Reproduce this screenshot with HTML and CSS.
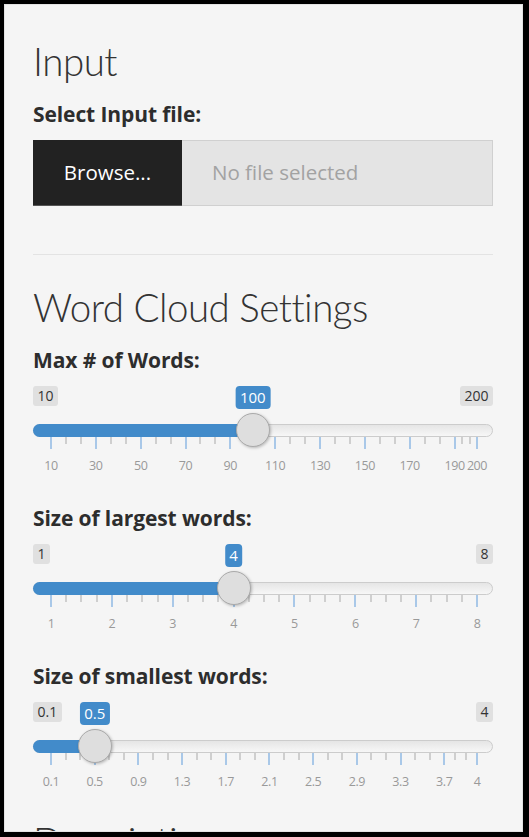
FILE: index.html
```html
<!DOCTYPE html>
<html lang="en">
<head>
<meta charset="utf-8">
<title>Word Cloud</title>
<link rel="stylesheet" href="styles.css">
</head>
<body>
<div class="well">
  <h3 class="heading">Input</h3>
  <div class="form-group">
    <label class="control-label">Select Input file:</label>
    <div class="file-input">
      <span class="btn-browse">Browse...</span>
      <span class="file-name">No file selected</span>
    </div>
  </div>
  <hr class="divider">
  <h3 class="heading">Word Cloud Settings</h3>

  <div class="form-group slider-group">
    <label class="control-label">Max # of Words:</label>
    <div class="irs">
      <div class="irs-minmax"><span class="irs-box">10</span><span class="irs-box">200</span></div>
      <div class="irs-line"><div class="irs-bar" style="width: calc(18px + 0.47368 * (100% - 32px))"></div></div>
      <div class="irs-grid">
        <span class="tick major" style="left:0%"><span class="tick-label">10</span></span>
        <span class="tick" style="left:3.509%"></span>
        <span class="tick" style="left:7.018%"></span>
        <span class="tick major" style="left:10.526%"><span class="tick-label">30</span></span>
        <span class="tick" style="left:14.035%"></span>
        <span class="tick" style="left:17.544%"></span>
        <span class="tick major" style="left:21.053%"><span class="tick-label">50</span></span>
        <span class="tick" style="left:24.561%"></span>
        <span class="tick" style="left:28.070%"></span>
        <span class="tick major" style="left:31.579%"><span class="tick-label">70</span></span>
        <span class="tick" style="left:35.088%"></span>
        <span class="tick" style="left:38.596%"></span>
        <span class="tick major" style="left:42.105%"><span class="tick-label">90</span></span>
        <span class="tick" style="left:45.614%"></span>
        <span class="tick" style="left:49.123%"></span>
        <span class="tick major" style="left:52.632%"><span class="tick-label">110</span></span>
        <span class="tick" style="left:56.140%"></span>
        <span class="tick" style="left:59.649%"></span>
        <span class="tick major" style="left:63.158%"><span class="tick-label">130</span></span>
        <span class="tick" style="left:66.667%"></span>
        <span class="tick" style="left:70.175%"></span>
        <span class="tick major" style="left:73.684%"><span class="tick-label">150</span></span>
        <span class="tick" style="left:77.193%"></span>
        <span class="tick" style="left:80.702%"></span>
        <span class="tick major" style="left:84.211%"><span class="tick-label">170</span></span>
        <span class="tick" style="left:87.719%"></span>
        <span class="tick" style="left:91.228%"></span>
        <span class="tick major" style="left:94.737%"><span class="tick-label">190</span></span>
        <span class="tick" style="left:96.491%"></span>
        <span class="tick" style="left:98.246%"></span>
        <span class="tick major" style="left:100%"><span class="tick-label">200</span></span>
      </div>
      <div class="irs-overlay">
        <span class="irs-single" style="left:47.368%">100</span>
        <span class="irs-handle" style="left:47.368%"></span>
      </div>
    </div>
  </div>

  <div class="form-group slider-group">
    <label class="control-label">Size of largest words:</label>
    <div class="irs">
      <div class="irs-minmax"><span class="irs-box">1</span><span class="irs-box">8</span></div>
      <div class="irs-line"><div class="irs-bar" style="width: calc(18px + 0.42857 * (100% - 32px))"></div></div>
      <div class="irs-grid">
        <span class="tick major" style="left:0%"><span class="tick-label">1</span></span>
        <span class="tick" style="left:3.571%"></span>
        <span class="tick" style="left:7.143%"></span>
        <span class="tick" style="left:10.714%"></span>
        <span class="tick major" style="left:14.286%"><span class="tick-label">2</span></span>
        <span class="tick" style="left:17.857%"></span>
        <span class="tick" style="left:21.429%"></span>
        <span class="tick" style="left:25%"></span>
        <span class="tick major" style="left:28.571%"><span class="tick-label">3</span></span>
        <span class="tick" style="left:32.143%"></span>
        <span class="tick" style="left:35.714%"></span>
        <span class="tick" style="left:39.286%"></span>
        <span class="tick major" style="left:42.857%"><span class="tick-label">4</span></span>
        <span class="tick" style="left:46.429%"></span>
        <span class="tick" style="left:50%"></span>
        <span class="tick" style="left:53.571%"></span>
        <span class="tick major" style="left:57.143%"><span class="tick-label">5</span></span>
        <span class="tick" style="left:60.714%"></span>
        <span class="tick" style="left:64.286%"></span>
        <span class="tick" style="left:67.857%"></span>
        <span class="tick major" style="left:71.429%"><span class="tick-label">6</span></span>
        <span class="tick" style="left:75%"></span>
        <span class="tick" style="left:78.571%"></span>
        <span class="tick" style="left:82.143%"></span>
        <span class="tick major" style="left:85.714%"><span class="tick-label">7</span></span>
        <span class="tick" style="left:89.286%"></span>
        <span class="tick" style="left:92.857%"></span>
        <span class="tick" style="left:96.429%"></span>
        <span class="tick major" style="left:100%"><span class="tick-label">8</span></span>
      </div>
      <div class="irs-overlay">
        <span class="irs-single" style="left:42.857%">4</span>
        <span class="irs-handle" style="left:42.857%"></span>
      </div>
    </div>
  </div>

  <div class="form-group slider-group last">
    <label class="control-label">Size of smallest words:</label>
    <div class="irs">
      <div class="irs-minmax"><span class="irs-box">0.1</span><span class="irs-box">4</span></div>
      <div class="irs-line"><div class="irs-bar" style="width: calc(18px + 0.10256 * (100% - 32px))"></div></div>
      <div class="irs-grid">
        <span class="tick major" style="left:0%"><span class="tick-label">0.1</span></span>
        <span class="tick" style="left:3.419%"></span>
        <span class="tick" style="left:6.838%"></span>
        <span class="tick major" style="left:10.256%"><span class="tick-label">0.5</span></span>
        <span class="tick" style="left:13.675%"></span>
        <span class="tick" style="left:17.094%"></span>
        <span class="tick major" style="left:20.513%"><span class="tick-label">0.9</span></span>
        <span class="tick" style="left:23.932%"></span>
        <span class="tick" style="left:27.350%"></span>
        <span class="tick major" style="left:30.769%"><span class="tick-label">1.3</span></span>
        <span class="tick" style="left:34.188%"></span>
        <span class="tick" style="left:37.607%"></span>
        <span class="tick major" style="left:41.026%"><span class="tick-label">1.7</span></span>
        <span class="tick" style="left:44.444%"></span>
        <span class="tick" style="left:47.863%"></span>
        <span class="tick major" style="left:51.282%"><span class="tick-label">2.1</span></span>
        <span class="tick" style="left:54.701%"></span>
        <span class="tick" style="left:58.120%"></span>
        <span class="tick major" style="left:61.538%"><span class="tick-label">2.5</span></span>
        <span class="tick" style="left:64.957%"></span>
        <span class="tick" style="left:68.376%"></span>
        <span class="tick major" style="left:71.795%"><span class="tick-label">2.9</span></span>
        <span class="tick" style="left:75.214%"></span>
        <span class="tick" style="left:78.632%"></span>
        <span class="tick major" style="left:82.051%"><span class="tick-label">3.3</span></span>
        <span class="tick" style="left:85.470%"></span>
        <span class="tick" style="left:88.889%"></span>
        <span class="tick major" style="left:92.308%"><span class="tick-label">3.7</span></span>
        <span class="tick" style="left:94.872%"></span>
        <span class="tick" style="left:97.436%"></span>
        <span class="tick major" style="left:100%"><span class="tick-label">4</span></span>
      </div>
      <div class="irs-overlay">
        <span class="irs-single" style="left:10.256%">0.5</span>
        <span class="irs-handle" style="left:10.256%"></span>
      </div>
    </div>
  </div>

  <h3 class="heading">Description</h3>
</div>
</body>
</html>
```

FILE: styles.css
```css
html, body {
  margin: 0;
  padding: 0;
}
body {
  background: #000;
  padding: 4px 6px 0 4px;
  height: 837px;
  box-sizing: border-box;
  overflow: hidden;
  font-family: "Open Sans", "Liberation Sans", sans-serif;
  color: #333;
}
.well {
  box-sizing: border-box;
  height: 828px;
  overflow: hidden;
  background: #f5f5f5;
  border: 1px solid #e3e3e3;
  padding: 34px 29px 0 28px;
}
.heading {
  font-family: Lato, "Open Sans", sans-serif;
  font-weight: 300;
  font-size: 38.5px;
  letter-spacing: -0.5px;
  line-height: 44px;
  color: #333;
  margin: 0 0 19px 0;
}
.form-group {
  display: flex;
  flex-direction: column;
}
.control-label {
  font-weight: 700;
  font-size: 21px;
  line-height: 24px;
  letter-spacing: -0.1px;
  color: #2d2d2d;
  margin: 0 0 14px 0;
}
.file-input {
  display: flex;
  height: 66px;
}
.btn-browse {
  width: 149px;
  background: #222;
  color: #fff;
  font-size: 20.5px;
  display: flex;
  align-items: center;
  justify-content: center;
  padding-bottom: 2px;
  border-bottom: 1px solid #555;
  box-sizing: border-box;
}
.file-name {
  flex: 1;
  background: #e4e4e4;
  border: 1px solid #d0d0d0;
  border-left: none;
  color: #a2a2a2;
  font-size: 20.5px;
  display: flex;
  align-items: center;
  padding-left: 30px;
  padding-bottom: 2px;
}
.divider {
  border: 0;
  border-top: 1px solid #e3e3e3;
  margin: 48px 0 30px 0;
}
.slider-group {
  margin-bottom: 28px;
}
.slider-group.last {
  margin-bottom: 25px;
}
.irs {
  position: relative;
  height: 92px;
}
.irs-minmax {
  display: flex;
  justify-content: space-between;
  height: 20px;
}
.irs-box {
  background: #e0e0e0;
  color: #333;
  font-size: 14px;
  line-height: 20px;
  height: 20px;
  padding: 0 4.5px;
  border-radius: 3px;
}
.irs-line {
  position: relative;
  margin-top: 18px;
  height: 13px;
  box-sizing: border-box;
  border: 1px solid #cccccc;
  border-radius: 7px;
  background: linear-gradient(to bottom, #dddddd -50%, #ffffff 150%);
}
.irs-bar {
  position: absolute;
  left: -1px;
  top: -1px;
  bottom: -1px;
  background: #428bca;
  border-radius: 7px 0 0 7px;
}
.irs-grid {
  position: relative;
  margin: 0 16px 0 18px;
  height: 41px;
}
.tick {
  position: absolute;
  top: 0;
  width: 2px;
  height: 7px;
  margin-left: -1px;
  background: #cfcfcf;
}
.tick.major {
  height: 12px;
  background: #a9c8e8;
}
.tick-label {
  position: absolute;
  top: 21px;
  left: 1px;
  transform: translateX(-50%);
  white-space: nowrap;
  font-size: 12.5px;
  letter-spacing: -0.4px;
  line-height: 16px;
  color: #999;
}
.irs-overlay {
  position: absolute;
  top: 0;
  left: 18px;
  right: 16px;
  bottom: 0;
}
.irs-single {
  position: absolute;
  top: 0;
  transform: translateX(-50%);
  background: #428bca;
  color: #fff;
  font-size: 15px;
  line-height: 23px;
  padding: 0 4.5px;
  border-radius: 4px;
}
.irs-handle {
  position: absolute;
  top: 27px;
  width: 34px;
  height: 34px;
  margin-left: -17px;
  box-sizing: border-box;
  border-radius: 50%;
  background: #dedede;
  border: 1px solid #aaaaaa;
  box-shadow: 1px 1px 3px rgba(0, 0, 0, 0.25);
}
```
